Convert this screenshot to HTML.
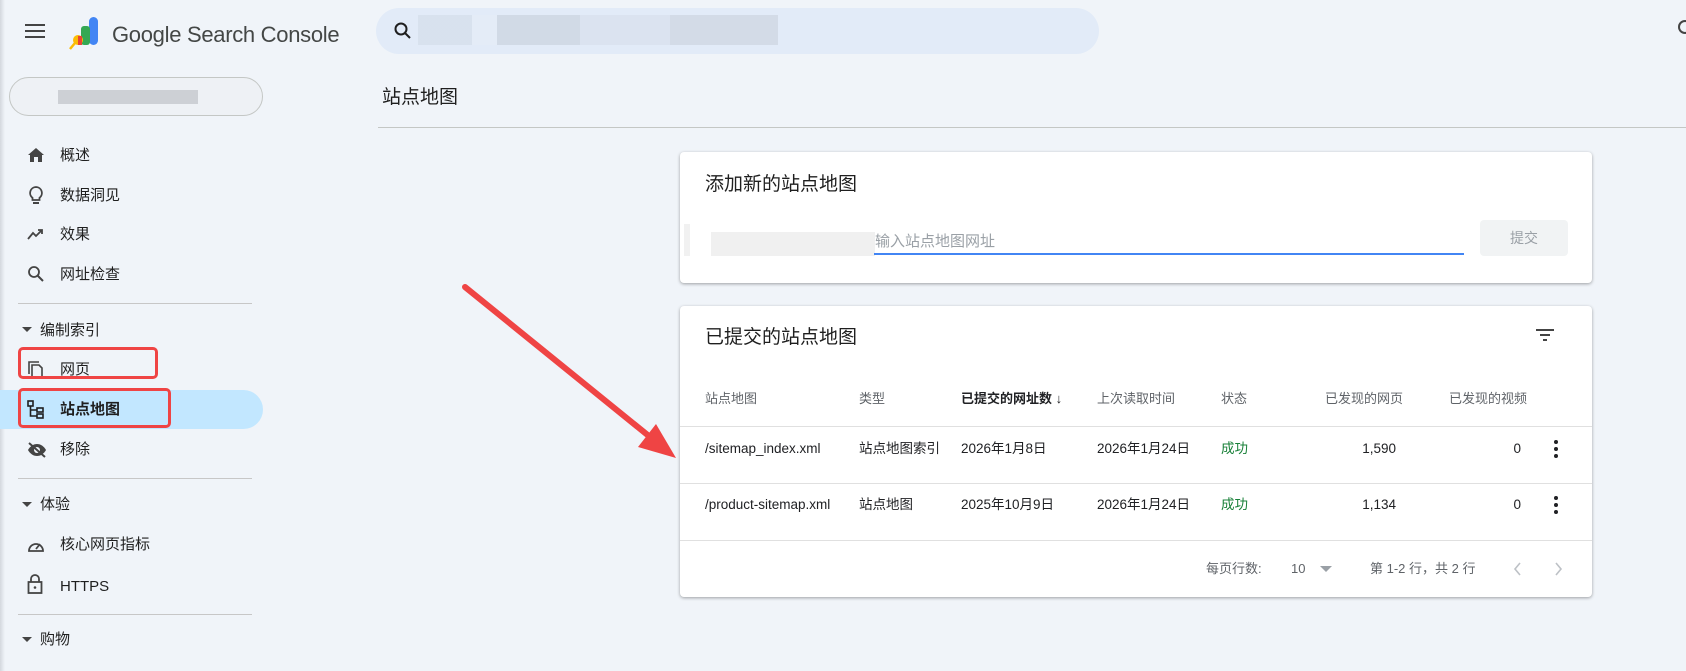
<!DOCTYPE html>
<html><head><meta charset="utf-8"><style>
*{margin:0;padding:0;box-sizing:border-box}
body{width:1686px;height:671px;overflow:hidden;background:#f0f4f9;font-family:"Liberation Sans","Noto Sans CJK SC",sans-serif;color:#1f1f1f;position:relative}
.a{position:absolute;white-space:nowrap;line-height:20px}
.nav{font-size:15px;color:#1f1f1f;left:60px}
.ic{position:absolute;left:27px}
.div{position:absolute;left:18px;width:234px;height:1px;background:#c7c7c7}
.card{position:absolute;left:680px;width:912px;background:#fff;border-radius:4px;box-shadow:0 1px 3px rgba(0,0,0,.35)}
.th{font-size:13px;color:#5f6368}
.td{font-size:13.5px;color:#202124}
.hl{position:absolute;left:0;width:912px;height:1px;background:#e0e0e0}
</style></head><body>
<div class="a" style="left:0;top:0;width:5px;height:671px;background:linear-gradient(90deg,#d4d8de,#f0f4f9)"></div>
<svg class="a" style="left:25px;top:23px" width="22" height="16"><rect y="1" width="20" height="2" fill="#444"/><rect y="7" width="20" height="2" fill="#444"/><rect y="13" width="20" height="2" fill="#444"/></svg>
<svg class="a" style="left:68px;top:16px" width="36" height="34" viewBox="0 0 36 34"><rect x="21" y="1" width="9" height="28" rx="4.5" fill="#4285f4"/><rect x="13" y="10" width="9" height="19" rx="3" fill="#34a853"/><circle cx="10" cy="24" r="5" fill="#fbbc04"/><rect x="10" y="20" width="4" height="9" fill="#ea4335"/><line x1="7" y1="27" x2="2" y2="33" stroke="#fbbc04" stroke-width="2.5"/></svg>
<div class="a" style="left:112px;top:22px;font-size:22px;line-height:26px;color:#444746;letter-spacing:-0.3px">Google Search Console</div>
<div class="a" style="left:376px;top:8px;width:723px;height:46px;border-radius:23px;background:#e2ebf8"></div>
<svg class="a" style="left:394px;top:22px" width="18" height="18"><circle cx="7" cy="7" r="5.5" fill="none" stroke="#1f1f1f" stroke-width="2"/><line x1="11" y1="11" x2="16" y2="16" stroke="#1f1f1f" stroke-width="2"/></svg>
<div class="a" style="left:418px;top:15px;width:360px;height:30px;background:linear-gradient(90deg,#d6dfeb 0 15%,#e4ecf7 15% 22%,#cdd6e2 22% 45%,#d9e1ee 45% 70%,#cfd7e3 70% 100%);opacity:.8"></div>
<div class="a" style="left:1678px;top:20px;width:14px;height:14px;border:2px solid #444;border-radius:50%"></div>
<div class="a" style="left:9px;top:77px;width:254px;height:39px;border:1px solid #c4c7c5;border-radius:20px;background:#eef1f5"></div>
<div class="a" style="left:58px;top:90px;width:140px;height:14px;background:#cdd0d5"></div>
<svg class="ic" style="top:147px" width="18" height="16"><path d="M9 1L1 8h2v7h4v-5h4v5h4V8h2z" fill="#444"/></svg>
<div class="a nav" style="top:146px">概述</div>
<svg class="ic" style="top:185px" width="18" height="20"><path d="M9 2a6 6 0 0 0-3.5 10.8V15h7v-2.2A6 6 0 0 0 9 2z" fill="none" stroke="#444" stroke-width="1.8"/><rect x="6" y="17" width="6" height="2" fill="#444"/></svg>
<div class="a nav" style="top:186px">数据洞见</div>
<svg class="ic" style="top:227px" width="18" height="14"><path d="M1 12l5-6 3 3 6-6M11 3h4v4" fill="none" stroke="#444" stroke-width="1.8"/></svg>
<div class="a nav" style="top:225px">效果</div>
<svg class="ic" style="top:265px" width="18" height="18"><circle cx="7" cy="7" r="5" fill="none" stroke="#444" stroke-width="1.8"/><line x1="11" y1="11" x2="16" y2="16" stroke="#444" stroke-width="2"/></svg>
<div class="a nav" style="top:265px">网址检查</div>
<div class="div" style="top:303px"></div>
<svg class="a" style="left:22px;top:327px" width="10" height="6"><path d="M0 0h10L5 5z" fill="#444"/></svg>
<div class="a nav" style="left:40px;top:321px">编制索引</div>
<svg class="ic" style="top:360px" width="18" height="18"><path d="M2 14V2h10" fill="none" stroke="#444" stroke-width="1.6"/><path d="M5 5h7l3 3v9H5z" fill="none" stroke="#444" stroke-width="1.6"/></svg>
<div class="a nav" style="top:360px">网页</div>
<div class="a" style="left:0;top:390px;width:263px;height:39px;background:#c2e7ff;border-radius:0 20px 20px 0"></div>
<svg class="ic" style="top:400px" width="18" height="20"><rect x="1" y="1" width="5" height="5" fill="none" stroke="#1f1f1f" stroke-width="1.6"/><rect x="10" y="8" width="6" height="4" fill="none" stroke="#1f1f1f" stroke-width="1.6"/><rect x="10" y="14" width="6" height="4" fill="none" stroke="#1f1f1f" stroke-width="1.6"/><path d="M3.5 6v10H10M3.5 10H10" fill="none" stroke="#1f1f1f" stroke-width="1.6"/></svg>
<div class="a nav" style="top:400px;font-weight:bold">站点地图</div>
<div class="a" style="left:18px;top:347px;width:140px;height:32px;border:3px solid #ef4444;border-radius:5px"></div>
<div class="a" style="left:18px;top:388px;width:153px;height:40px;border:3px solid #ef4444;border-radius:5px"></div>
<svg class="ic" style="top:442px" width="20" height="16"><path d="M1 8s3-6 9-6 9 6 9 6-3 6-9 6-9-6-9-6z" fill="#444"/><circle cx="10" cy="8" r="3" fill="#f0f4f9"/><line x1="2" y1="1" x2="18" y2="15" stroke="#444" stroke-width="2"/></svg>
<div class="a nav" style="top:440px">移除</div>
<div class="div" style="top:478px"></div>
<svg class="a" style="left:22px;top:502px" width="10" height="6"><path d="M0 0h10L5 5z" fill="#444"/></svg>
<div class="a nav" style="left:40px;top:495px">体验</div>
<svg class="ic" style="top:538px" width="18" height="14"><path d="M2 13a7 7 0 1 1 14 0z" fill="none" stroke="#444" stroke-width="1.8"/><line x1="9" y1="11" x2="13" y2="6" stroke="#444" stroke-width="1.8"/></svg>
<div class="a nav" style="top:535px">核心网页指标</div>
<svg class="ic" style="top:574px" width="16" height="20"><path d="M4 8V5a4 4 0 0 1 8 0v3" fill="none" stroke="#444" stroke-width="1.8"/><rect x="1.5" y="8" width="13" height="11" fill="none" stroke="#444" stroke-width="1.8"/><circle cx="8" cy="13.5" r="1.3" fill="#444"/></svg>
<div class="a nav" style="top:577px">HTTPS</div>
<div class="div" style="top:614px"></div>
<svg class="a" style="left:22px;top:637px" width="10" height="6"><path d="M0 0h10L5 5z" fill="#444"/></svg>
<div class="a nav" style="left:40px;top:630px">购物</div>
<div class="a" style="left:382px;top:86px;font-size:19px;line-height:24px;color:#1f1f1f">站点地图</div>
<div class="a" style="left:378px;top:127px;width:1308px;height:1px;background:#c4c7c5"></div>
<div class="card" style="top:152px;height:131px">
<div class="a" style="left:25px;top:21px;font-size:19px;line-height:24px">添加新的站点地图</div>
<div class="a" style="left:4px;top:72px;width:6px;height:32px;background:#f1f1f1"></div>
<div class="a" style="left:31px;top:80px;width:164px;height:24px;background:#f0f0f0"></div>
<div class="a" style="left:195px;top:80px;font-size:15px;color:#9aa0a6">输入站点地图网址</div>
<div class="a" style="left:194px;top:101px;width:590px;height:2px;background:#4285f4"></div>
<div class="a" style="left:800px;top:68px;width:88px;height:36px;background:#f1f3f4;border-radius:4px;font-size:14px;color:#9aa0a6;text-align:center;line-height:36px">提交</div>
</div>
<div class="card" style="top:306px;height:291px">
<div class="a" style="left:25px;top:20px;font-size:19px;line-height:24px">已提交的站点地图</div>
<svg class="a" style="left:856px;top:22px" width="20" height="14"><rect x="0" y="1" width="18" height="2" fill="#444"/><rect x="4" y="6" width="10" height="2" fill="#444"/><rect x="7" y="11" width="4" height="2" fill="#444"/></svg>
<div class="a th" style="left:25px;top:83px">站点地图</div>
<div class="a th" style="left:179px;top:83px">类型</div>
<div class="a th" style="left:281px;top:83px;color:#202124;font-weight:bold">已提交的网址数 <span style="font-weight:normal">↓</span></div>
<div class="a th" style="left:417px;top:83px">上次读取时间</div>
<div class="a th" style="left:541px;top:83px">状态</div>
<div class="a th" style="left:645px;top:83px">已发现的网页</div>
<div class="a th" style="left:769px;top:83px">已发现的视频</div>
<div class="hl" style="top:120px"></div>
<div class="a td" style="left:25px;top:133px">/sitemap_index.xml</div>
<div class="a td" style="left:179px;top:133px">站点地图索引</div>
<div class="a td" style="left:281px;top:133px">2026年1月8日</div>
<div class="a td" style="left:417px;top:133px">2026年1月24日</div>
<div class="a td" style="left:541px;top:133px;color:#188038">成功</div>
<div class="a td" style="left:660px;top:133px;width:56px;text-align:right">1,590</div>
<div class="a td" style="left:800px;top:133px;width:41px;text-align:right">0</div>
<svg class="a" style="left:874px;top:134px" width="4" height="18"><circle cx="2" cy="2" r="2" fill="#202124"/><circle cx="2" cy="9" r="2" fill="#202124"/><circle cx="2" cy="16" r="2" fill="#202124"/></svg>
<div class="hl" style="top:177px"></div>
<div class="a td" style="left:25px;top:189px">/product-sitemap.xml</div>
<div class="a td" style="left:179px;top:189px">站点地图</div>
<div class="a td" style="left:281px;top:189px">2025年10月9日</div>
<div class="a td" style="left:417px;top:189px">2026年1月24日</div>
<div class="a td" style="left:541px;top:189px;color:#188038">成功</div>
<div class="a td" style="left:660px;top:189px;width:56px;text-align:right">1,134</div>
<div class="a td" style="left:800px;top:189px;width:41px;text-align:right">0</div>
<svg class="a" style="left:874px;top:190px" width="4" height="18"><circle cx="2" cy="2" r="2" fill="#202124"/><circle cx="2" cy="9" r="2" fill="#202124"/><circle cx="2" cy="16" r="2" fill="#202124"/></svg>
<div class="hl" style="top:234px"></div>
<div class="a th" style="left:526px;top:253px">每页行数:</div>
<div class="a th" style="left:611px;top:253px">10</div>
<svg class="a" style="left:640px;top:260px" width="12" height="7"><path d="M0 0h12L6 6z" fill="#9aa0a6"/></svg>
<div class="a th" style="left:690px;top:253px">第 1-2 行，共 2 行</div>
<svg class="a" style="left:832px;top:255px" width="10" height="16"><path d="M8 2L3 8l5 6" fill="none" stroke="#bdc1c6" stroke-width="1.6"/></svg>
<svg class="a" style="left:874px;top:255px" width="10" height="16"><path d="M2 2l5 6-5 6" fill="none" stroke="#bdc1c6" stroke-width="1.6"/></svg>
</div>
<svg class="a" style="left:0;top:0" width="1686" height="671"><line x1="465" y1="287" x2="655" y2="441" stroke="#ef4444" stroke-width="6" stroke-linecap="round"/><path d="M676 458L638 447L656 424z" fill="#ef4444"/></svg>
</body></html>
